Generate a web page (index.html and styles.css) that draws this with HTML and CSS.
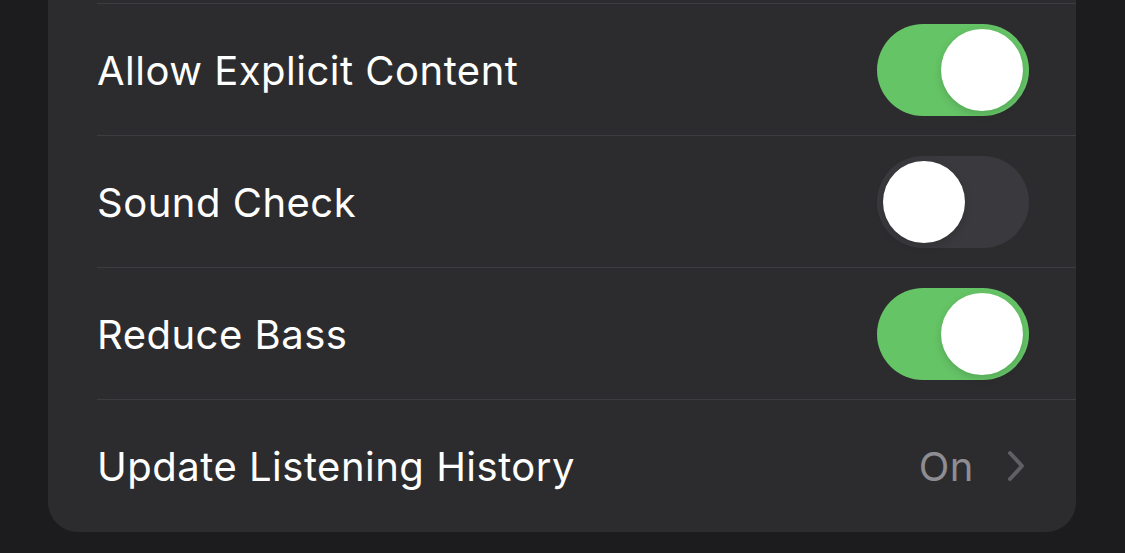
FILE: index.html
```html
<!DOCTYPE html>
<html>
<head>
<meta charset="utf-8">
<link rel="stylesheet" href="styles.css">
</head>
<body>
<div class="card">
  <div class="row">
    <span class="label">Allow Explicit Content</span>
    <span class="toggle on"><span class="knob"></span></span>
  </div>
  <div class="row">
    <span class="label">Sound Check</span>
    <span class="toggle"><span class="knob"></span></span>
  </div>
  <div class="row">
    <span class="label">Reduce Bass</span>
    <span class="toggle on"><span class="knob"></span></span>
  </div>
  <div class="row last">
    <span class="label">Update Listening History</span>
    <span class="detail">
      <span class="value">On</span>
      <svg class="chev" width="20" height="32" viewBox="0 0 20 32"><path d="M4 3 L16 16 L4 29" fill="none" stroke="#5f5f64" stroke-width="4" stroke-linecap="round" stroke-linejoin="round"/></svg>
    </span>
  </div>
</div>
</body>
</html>
```
FILE: styles.css
```css
html, body {
  margin: 0;
  padding: 0;
  background: #1c1c1e;
  height: 553px;
  overflow: hidden;
}
body {
  padding: 0 49px 0 48px;
  font-family: Inter, "Noto Sans", sans-serif;
}
.card {
  background: #2c2c2e;
  border-radius: 0 0 30px 30px;
  padding-top: 3px;
}
.row {
  margin-left: 49px;
  padding-right: 47px;
  height: 131px;
  border-top: 1px solid #3d3d41;
  display: flex;
  align-items: center;
  justify-content: space-between;
}
.row.last {
  height: 132px;
}
.label {
  color: #ffffff;
  font-size: 40px;
  letter-spacing: 0.5px;
  padding-top: 1px;
}
.toggle {
  width: 152px;
  height: 92px;
  border-radius: 46px;
  background: #3a3a3e;
  position: relative;
  box-sizing: border-box;
  padding: 5px 6px;
  display: flex;
}
.toggle.on {
  background: #65c466;
  justify-content: flex-end;
}
.knob {
  width: 82px;
  height: 82px;
  border-radius: 50%;
  background: #ffffff;
  box-shadow: 0 3px 8px rgba(0,0,0,0.15);
}
.detail {
  display: flex;
  align-items: center;
  gap: 32px;
  padding-right: 3px;
}
.value {
  color: #8d8d93;
  font-size: 40px;
  letter-spacing: 0.5px;
  padding-top: 1px;
}
.chev {
  display: block;
}
```
